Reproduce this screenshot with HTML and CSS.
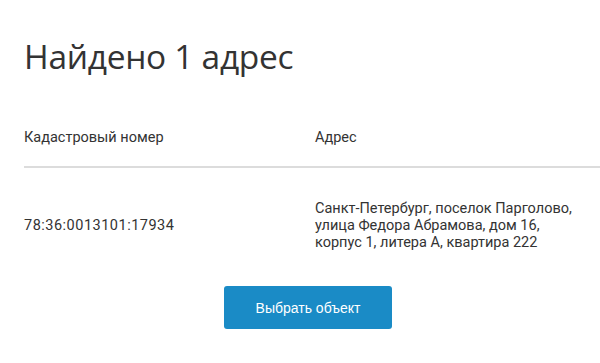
FILE: index.html
```html
<!DOCTYPE html>
<html lang="ru">
<head>
<meta charset="utf-8">
<link rel="stylesheet" href="styles.css">
</head>
<body>
<div class="page">
  <h1 class="title">Найдено 1 адрес</h1>
  <div class="table">
    <div class="row head">
      <div class="cell c1">Кадастровый номер</div>
      <div class="cell c2">Адрес</div>
    </div>
    <div class="row body">
      <div class="cell c1 num">78:36:0013101:17934</div>
      <div class="cell c2">Санкт-Петербург, поселок Парголово,<br>улица Федора Абрамова, дом 16,<br>корпус 1, литера А, квартира 222</div>
    </div>
  </div>
  <div class="actions">
    <button class="btn">Выбрать объект</button>
  </div>
</div>
</body>
</html>
```
FILE: styles.css
```css
html, body { margin: 0; padding: 0; background: #fff; }
.page {
  width: 600px;
  padding: 0 0 0 24px;
  box-sizing: border-box;
  color: #333;
  font-family: "Roboto", "Open Sans", sans-serif;
}
.title {
  margin: 0;
  padding-top: 36px;
  font-family: "Open Sans", sans-serif;
  font-weight: 400;
  font-size: 33.5px;
  line-height: 40px;
  color: #333;
  letter-spacing: -0.3px;
}
.table { margin-top: 53px; }
.row { display: flex; }
.row.head {
  border-bottom: 2px solid #dcdcdc;
  padding-bottom: 19px;
  font-size: 14.5px;
  line-height: 18px;
}
.row.body {
  align-items: center;
  padding: 32px 0 0;
  font-size: 14.5px;
  line-height: 17px;
}
.c1 { width: 291px; flex: none; }
.c2 { flex: 1; }
.num { letter-spacing: 0.5px; }
.actions {
  display: flex;
  justify-content: center;
  padding: 35px 0 0;
  margin-left: -24px;
}
.btn {
  width: 168px;
  height: 43px;
  border: 0;
  border-radius: 3px;
  background: #1a8bc6;
  color: #fff;
  font-family: "Liberation Sans", Arial, sans-serif;
  font-size: 14px;
  margin-left: 16px;
}
```
